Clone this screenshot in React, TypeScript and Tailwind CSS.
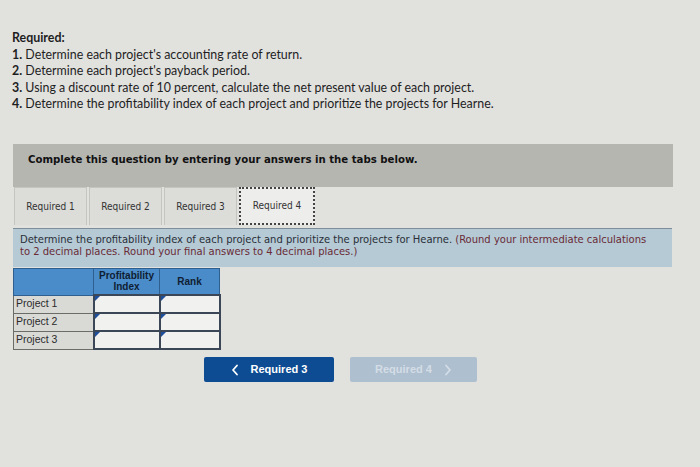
import * as React from "react"

const tabs = ["Required 1", "Required 2", "Required 3", "Required 4"]
const projects = ["Project 1", "Project 2", "Project 3"]

function InputCell() {
  return (
    <td className="relative border-2 border-[#3b4656] bg-[#f1f1ef] p-0">
      <span className="absolute left-0 top-0 h-0 w-0 border-l-[5px] border-b-[5px] border-l-[#1f4f9a] border-b-transparent" />
      <div className="h-[14px]" />
    </td>
  )
}

function Chevron({ dir }: { dir: "left" | "right" }) {
  return (
    <svg width="8" height="12" viewBox="0 0 8 12" fill="none">
      <path
        d={dir === "left" ? "M6 1.5 L2 6 L6 10.5" : "M2 1.5 L6 6 L2 10.5"}
        stroke="currentColor"
        strokeWidth="1.8"
        strokeLinecap="round"
        strokeLinejoin="round"
      />
    </svg>
  )
}

export default function App() {
  return (
    <div className="relative h-[467px] w-[700px] overflow-hidden bg-[#e1e1de] text-[#1e1e1e]">
      {/* question text */}
      <div className="pl-3 pt-[30px] font-['Lato',sans-serif] text-[12.4px] leading-[16.5px]">
        <p className="font-bold">Required:</p>
        <p><b>1.</b> Determine each project's accounting rate of return.</p>
        <p><b>2.</b> Determine each project's payback period.</p>
        <p><b>3.</b> Using a discount rate of 10 percent, calculate the net present value of each project.</p>
        <p><b>4.</b> Determine the profitability index of each project and prioritize the projects for Hearne.</p>
      </div>

      {/* banner */}
      <div className="ml-[13px] mr-[27px] mt-[31px] flex h-[43px] items-start bg-[#b6b6b1] pl-[15px] pt-[8px]">
        <p className="font-['DejaVu_Sans',sans-serif] text-[11.3px] font-bold font-stretch-condensed text-[#111]">
          Complete this question by entering your answers in the tabs below.
        </p>
      </div>

      {/* tabs */}
      <div className="ml-[14px] flex h-[38px] gap-[2px] font-['DejaVu_Sans',sans-serif] text-[10px] font-stretch-condensed text-[#333]">
        {tabs.map((t, i) =>
          i === 3 ? (
            <div
              key={t}
              className="flex w-[76px] items-center justify-center border-2 border-dotted border-[#444] bg-[#ededeb]"
            >
              {t}
            </div>
          ) : (
            <div
              key={t}
              className="flex w-[73px] items-center justify-center border border-b-0 border-[#c4c4c0] bg-[#dcdcd9]"
            >
              {t}
            </div>
          )
        )}
      </div>

      {/* instructions */}
      <div className="ml-[13px] mr-[28px] mt-[3px] h-[39px] whitespace-nowrap border-t border-[#7d8e99] bg-[#b5cad5] pl-[7px] pt-[5px] font-['DejaVu_Sans',sans-serif] text-[11.1px] leading-[12.5px] font-stretch-condensed text-[#2a2f38]">
        Determine the profitability index of each project and prioritize the projects for Hearne.{" "}
        <span className="text-[#6a2a36]">
          (Round your intermediate calculations
          <br />
          to 2 decimal places. Round your final answers to 4 decimal places.)
        </span>
      </div>

      {/* table */}
      <table className="ml-[13px] mt-[1px] border-collapse font-['Liberation_Sans',sans-serif] text-[10.5px]">
        <thead>
          <tr className="h-[27px] bg-[#4a8bc9] text-[10px] font-bold leading-[11px] text-[#0f1e33]">
            <th className="w-[80px] border border-[#2f5f8f]" />
            <th className="w-[66px] border border-[#2f5f8f] font-bold">
              Profitability
              <br />
              Index
            </th>
            <th className="w-[60px] border border-[#2f5f8f] font-bold">Rank</th>
          </tr>
        </thead>
        <tbody>
          {projects.map((p) => (
            <tr key={p} className="h-[18px]">
              <td className="border border-[#6b6b68] bg-[#d9d9d6] pl-[2px] text-[#2b2b2b]">{p}</td>
              <InputCell />
              <InputCell />
            </tr>
          ))}
        </tbody>
      </table>

      {/* navigation */}
      <div className="ml-[204px] mt-[7px] flex gap-[16px] font-['Liberation_Sans',sans-serif] text-[11px] font-bold">
        <button className="flex h-[25px] w-[130px] items-center justify-center gap-[12px] rounded-[2px] bg-[#0d4c93] text-white">
          <Chevron dir="left" />
          <span>Required 3</span>
        </button>
        <button className="flex h-[25px] w-[127px] items-center justify-center gap-[12px] rounded-[2px] bg-[#aebfcf] text-[#d4dde6]">
          <span>Required 4</span>
          <Chevron dir="right" />
        </button>
      </div>
    </div>
  )
}
